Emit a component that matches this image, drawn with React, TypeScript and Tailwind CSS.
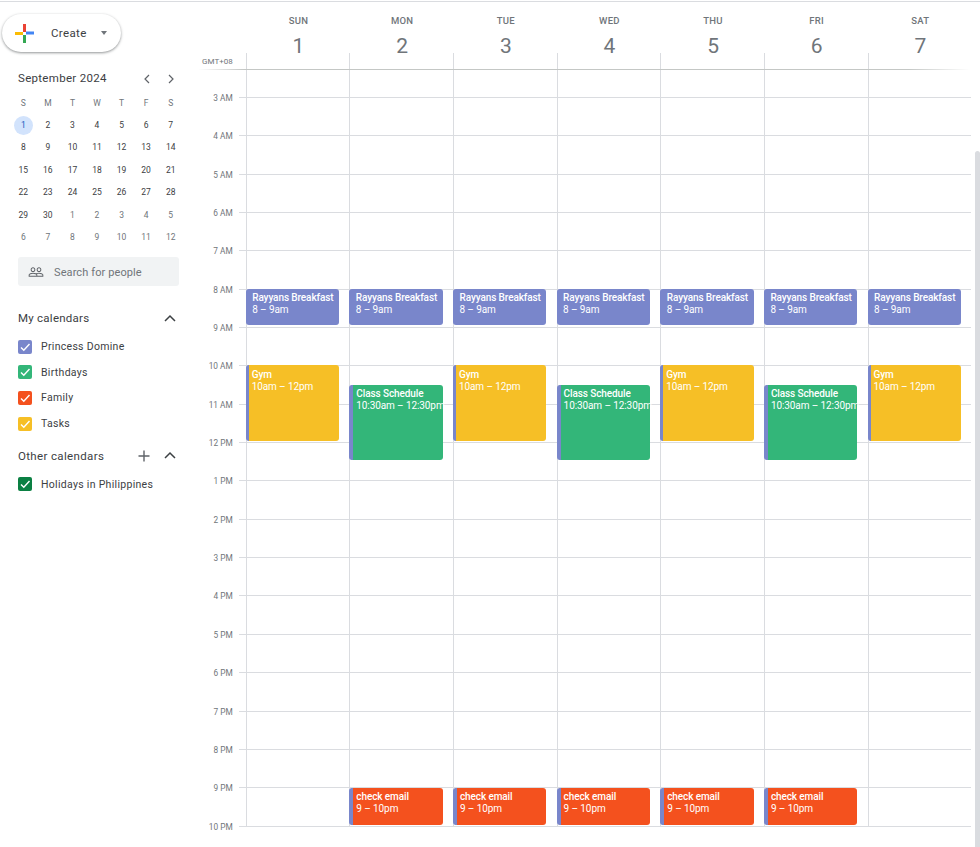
const days = [
  { name: "SUN", num: 1 },
  { name: "MON", num: 2 },
  { name: "TUE", num: 3 },
  { name: "WED", num: 4 },
  { name: "THU", num: 5 },
  { name: "FRI", num: 6 },
  { name: "SAT", num: 7 },
];

const hours = [
  "3 AM", "4 AM", "5 AM", "6 AM", "7 AM", "8 AM", "9 AM", "10 AM", "11 AM",
  "12 PM", "1 PM", "2 PM", "3 PM", "4 PM", "5 PM", "6 PM", "7 PM", "8 PM",
  "9 PM", "10 PM",
];

const monthRows = [
  [1, 2, 3, 4, 5, 6, 7],
  [8, 9, 10, 11, 12, 13, 14],
  [15, 16, 17, 18, 19, 20, 21],
  [22, 23, 24, 25, 26, 27, 28],
  [29, 30, 1, 2, 3, 4, 5],
  [6, 7, 8, 9, 10, 11, 12],
];

const breakfast = {
  title: "Rayyans Breakfast",
  time: "8 – 9am",
  top: "top-[236px] h-[36px] pt-[3px]",
  color: "bg-[#7986cb]",
  stripe: "pl-[6.5px]",
};
const gym = {
  title: "Gym",
  time: "10am – 12pm",
  top: "top-[312px] h-[76px] pt-[4px]",
  color: "bg-[#f6bf26]",
  stripe: "border-l-[3px] border-[#7986cb] pl-[3px]",
};
const classes = {
  title: "Class Schedule",
  time: "10:30am – 12:30pm",
  top: "top-[332px] h-[75px] pt-[3px]",
  color: "bg-[#33b679]",
  stripe: "border-l-[4px] border-[#7986cb] pl-[3px]",
};
const email = {
  title: "check email",
  time: "9 – 10pm",
  top: "top-[735px] h-[37px] pt-[3px]",
  color: "bg-[#f4511e]",
  stripe: "border-l-[4px] border-[#7986cb] pl-[3px]",
};

const dayEvents = [
  [breakfast, gym],
  [breakfast, classes, email],
  [breakfast, gym, email],
  [breakfast, classes, email],
  [breakfast, gym, email],
  [breakfast, classes, email],
  [breakfast, gym],
];

const myCalendars = [
  { name: "Princess Domine", color: "bg-[#7986cb]" },
  { name: "Birthdays", color: "bg-[#33b679]" },
  { name: "Family", color: "bg-[#f4511e]" },
  { name: "Tasks", color: "bg-[#f6bf26]" },
];

function ChevronUp() {
  return (
    <svg width="14" height="14" viewBox="0 0 14 14" fill="none" stroke="#3c4043" strokeWidth="1.5">
      <path d="M2 9l5-5 5 5" />
    </svg>
  );
}

function MonthArrow({ dir }: { dir: "left" | "right" }) {
  return (
    <svg width="8" height="10" viewBox="0 0 8 10" fill="none" stroke="#5f6368" strokeWidth="1.2">
      <path d={dir === "left" ? "M6 1L2 5l4 4" : "M2 1l4 4-4 4"} />
    </svg>
  );
}

function CheckBox({ color }: { color: string }) {
  return (
    <span className={`flex h-[14px] w-[14px] items-center justify-center rounded-[2px] ${color}`}>
      <svg width="12" height="12" viewBox="0 0 12 12" fill="none" stroke="white" strokeWidth="1.4">
        <path d="M2 6.5l2.8 2.8L10.5 3" />
      </svg>
    </span>
  );
}

function Sidebar() {
  return (
    <aside className="w-[190px] shrink-0 font-['Roboto',sans-serif]">
      <div className="ml-[2px] mt-[14px] flex h-[38px] w-[119px] items-center rounded-full bg-white shadow-[0_1px_3px_rgba(60,64,67,0.4),0_1px_2px_rgba(60,64,67,0.2)]">
        <svg className="ml-[13px]" width="19" height="19" viewBox="0 0 19 19">
          <rect x="8" y="0" width="3" height="8" fill="#ea4335" />
          <rect x="11" y="7.5" width="8" height="3" fill="#4285f4" />
          <rect x="8" y="11" width="3" height="8" fill="#34a853" />
          <rect x="0" y="8" width="8" height="3" fill="#fbbc04" />
        </svg>
        <span className="ml-[17px] mt-px text-[11.5px] tracking-[0.35px] text-[#3c4043]">Create</span>
        <span className="ml-[14px] h-0 w-0 border-x-[3.5px] border-t-[4px] border-x-transparent border-t-[#70757a]" />
      </div>

      <div className="ml-[18px] mt-[18px] flex h-[18px] w-[157px] items-center justify-between">
        <span className="text-[11.5px] tracking-[0.3px] text-[#3c4043]">September 2024</span>
        <span className="flex gap-[16px]">
          <MonthArrow dir="left" />
          <MonthArrow dir="right" />
        </span>
      </div>

      <div className="ml-[11px] mt-[4px] w-[172px]">
        <div className="grid h-[22px] grid-cols-7 items-center text-center text-[8.5px] text-[#70757a]">
          {["S", "M", "T", "W", "T", "F", "S"].map((d, i) => (
            <span key={i}>{d}</span>
          ))}
        </div>
        {monthRows.map((row, r) => (
          <div key={r} className="grid h-[22.5px] grid-cols-7 items-center justify-items-center text-[8.5px]">
            {row.map((n, i) => {
              const muted = (r === 4 && i > 1) || r === 5;
              if (r === 0 && i === 0) {
                return (
                  <span
                    key={i}
                    className="flex h-[19px] w-[19px] items-center justify-center rounded-full bg-[#d2e3fc] text-[#185abc]"
                  >
                    {n}
                  </span>
                );
              }
              return (
                <span key={i} className={muted ? "text-[#70757a]" : "text-[#3c4043]"}>
                  {n}
                </span>
              );
            })}
          </div>
        ))}
      </div>

      <div className="ml-[18px] mt-[8px] flex h-[29px] w-[161px] items-center rounded-[3px] bg-[#f1f3f4]">
        <svg className="ml-[10px]" width="16" height="16" viewBox="0 0 24 24" fill="#5f6368">
          <path d="M16.5 13c-1.2 0-3.07.34-4.5 1-1.43-.67-3.3-1-4.5-1C5.33 13 1 14.08 1 16.25V19h22v-2.75c0-2.17-4.33-3.25-6.5-3.25zm-4 4.5h-10v-1.25c0-.54 2.56-1.75 5-1.75s5 1.21 5 1.75v1.25zm9 0H14v-1.25c0-.46-.2-.86-.52-1.22.88-.3 1.96-.53 3.02-.53 2.44 0 5 1.21 5 1.75v1.25zM7.5 12c1.93 0 3.5-1.57 3.5-3.5S9.43 5 7.5 5 4 6.57 4 8.5 5.57 12 7.5 12zm0-5.5c1.1 0 2 .9 2 2s-.9 2-2 2-2-.9-2-2 .9-2 2-2zm9 5.5c1.93 0 3.5-1.57 3.5-3.5S18.43 5 16.5 5 13 6.57 13 8.5s1.57 3.5 3.5 3.5zm0-5.5c1.1 0 2 .9 2 2s-.9 2-2 2-2-.9-2-2 .9-2 2-2z" />
        </svg>
        <span className="ml-[10px] mt-[3px] text-[11px] tracking-[0.1px] text-[#70757a]">Search for people</span>
      </div>

      <div className="ml-[18px] mt-[23px] flex h-[20px] w-[159px] items-center justify-between">
        <span className="text-[11.5px] tracking-[0.25px] text-[#3c4043]">My calendars</span>
        <ChevronUp />
      </div>
      <ul className="ml-[18px] mt-[5px]">
        {myCalendars.map((c) => (
          <li key={c.name} className="flex h-[25.6px] items-center gap-[9px]">
            <CheckBox color={c.color} />
            <span className="text-[10.5px] tracking-[0.3px] text-[#3c4043]">{c.name}</span>
          </li>
        ))}
      </ul>

      <div className="ml-[18px] mt-[10px] flex h-[20px] w-[159px] items-center">
        <span className="text-[11.5px] tracking-[0.35px] text-[#3c4043]">Other calendars</span>
        <svg className="ml-auto mr-[12px]" width="14" height="14" viewBox="0 0 14 14" stroke="#5f6368" strokeWidth="1.4">
          <path d="M7 1.5v11M1.5 7h11" />
        </svg>
        <ChevronUp />
      </div>
      <div className="ml-[18px] mt-[10px] flex h-[16px] items-center gap-[9px]">
        <CheckBox color="bg-[#0b8043]" />
        <span className="text-[10.5px] tracking-[0.3px] text-[#3c4043]">Holidays in Philippines</span>
      </div>
    </aside>
  );
}

function EventCard({ ev }: { ev: typeof breakfast }) {
  return (
    <div
      className={`absolute left-[-1px] z-10 w-[93.5px] rounded-[3px] text-[10px] leading-[12px] tracking-[-0.1px] text-white ${ev.top} ${ev.color} ${ev.stripe}`}
    >
      <div className="whitespace-nowrap">
        <div className="font-medium">{ev.title}</div>
        <div>{ev.time}</div>
      </div>
    </div>
  );
}

function TimeGutter() {
  return (
    <div className="w-[55.7px] shrink-0 text-[8.3px] text-[#70757a]">
      <div className="flex h-[17px] items-end justify-end pr-[13px]">
        <span className="translate-y-[-2px] text-[8px]">GMT+08</span>
      </div>
      <div className="flex h-[28px] items-end justify-end">
        <span className="mr-[6px] translate-y-[5px] leading-[10px]">3 AM</span>
        <div className="w-[7px] border-b border-[#dadce0]" />
      </div>
      {hours.slice(1).map((h) => (
        <div key={h} className="flex h-[38.35px] items-end justify-end">
          <span className="mr-[6px] translate-y-[5px] leading-[10px]">{h}</span>
          <div className="w-[7px] border-b border-[#dadce0]" />
        </div>
      ))}
    </div>
  );
}

export default function App() {
  return (
    <div className="relative flex h-[847px] w-[980px] overflow-hidden bg-white">
      <div className="absolute left-0 right-0 top-[1px] h-px bg-[#dadce0]" />
      <Sidebar />
      <main className="relative flex-1 font-['Roboto',sans-serif]">
        <div className="ml-[56.7px] grid h-[53px] grid-cols-[repeat(7,103.65px)] pt-[15px] text-center">
          {days.map((d) => (
            <div key={d.name}>
              <div className="text-[9.5px] font-medium leading-[11px] tracking-[0.3px] text-[#70757a]">{d.name}</div>
              <div className="mt-[6px] text-[21px] leading-[28px] text-[#70757a]">{d.num}</div>
            </div>
          ))}
        </div>

        <div className="flex">
          <TimeGutter />
          <div className="grid w-[726px] grid-cols-[repeat(7,103.65px)]">
            {dayEvents.map((evs, i) => (
              <div key={i} className="relative border-l border-[#dadce0]">
                <div className="h-[17px]" />
                <div className="h-[28px] border-b border-[#dadce0]" />
                {hours.slice(1).map((h) => (
                  <div key={h} className="h-[38.35px] border-b border-[#dadce0]" />
                ))}
                {evs.map((ev) => (
                  <EventCard key={ev.title} ev={ev} />
                ))}
              </div>
            ))}
          </div>
        </div>

        <div className="absolute left-[8px] top-[69px] h-px w-[772px] bg-[linear-gradient(to_right,transparent,#c4c7c5_6%,#c4c7c5_92%,transparent)]" />
      </main>
      <div className="absolute bottom-0 right-0 top-[151px] w-[5px] rounded-t-[3px] bg-[#dadce0]" />
    </div>
  );
}
